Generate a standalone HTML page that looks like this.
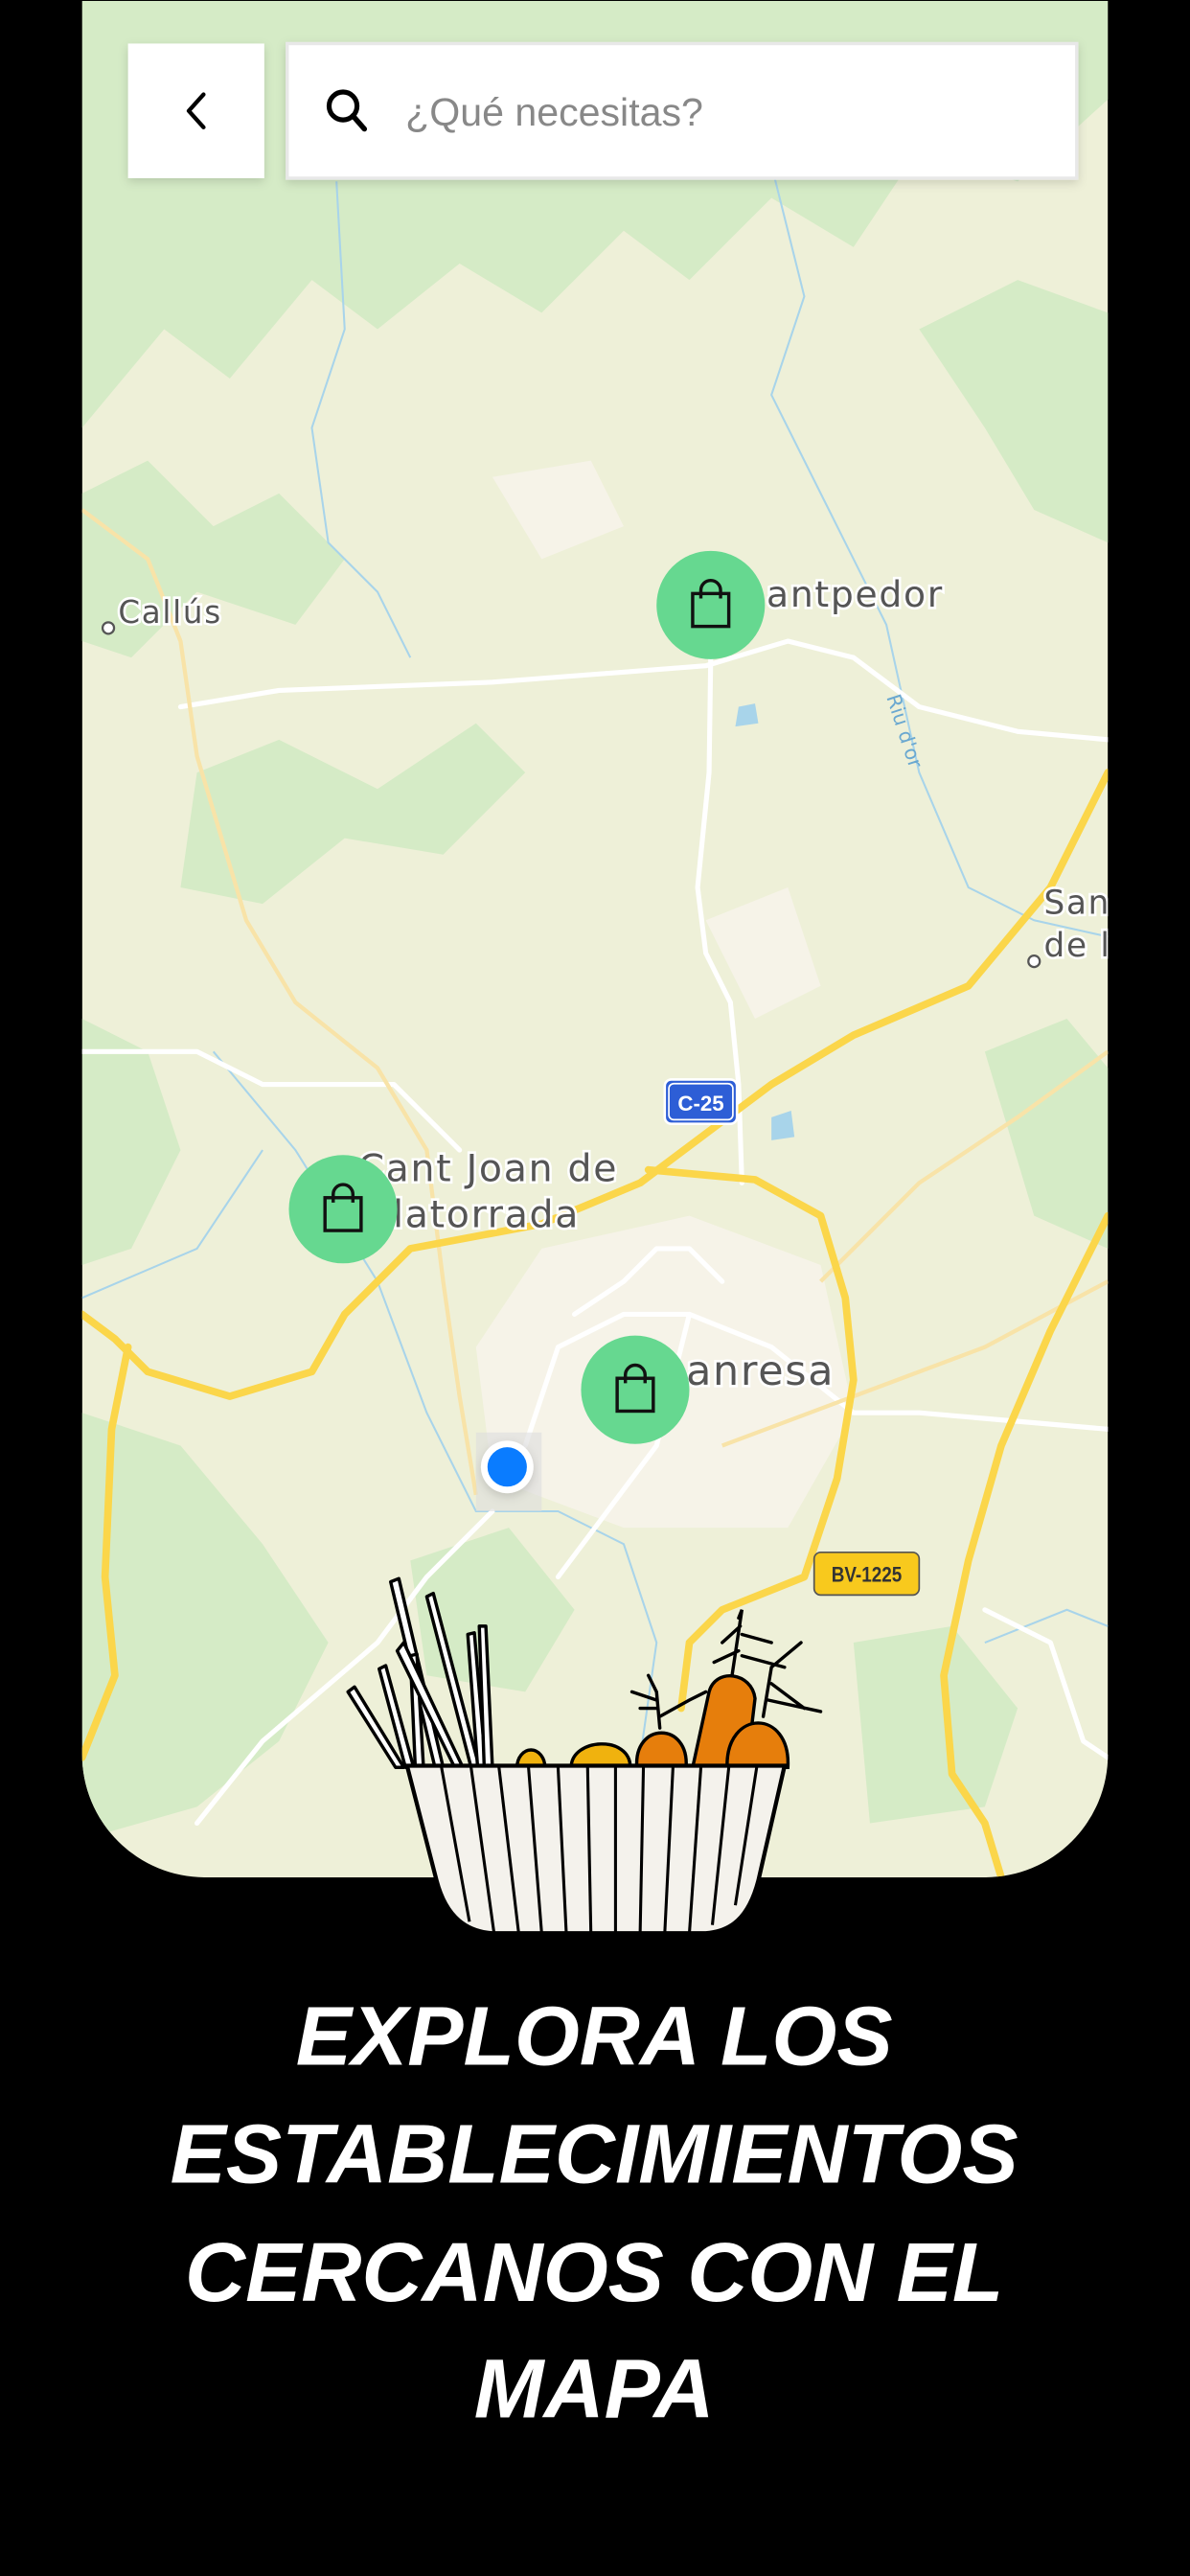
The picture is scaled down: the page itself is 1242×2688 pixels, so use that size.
<!DOCTYPE html>
<html><head><meta charset="utf-8"><style>
html,body{margin:0;padding:0;background:#000;}
svg{display:block;}
</style></head><body>
<svg width="1242" height="2688" viewBox="0 0 725 1568" xmlns="http://www.w3.org/2000/svg">
<defs>
<clipPath id="m"><path d="M50 0H675V1068A75 75 0 0 1 600 1143H125A75 75 0 0 1 50 1068Z"/></clipPath>
<filter id="sh" x="-10%" y="-20%" width="120%" height="150%"><feDropShadow dx="0" dy="2" stdDeviation="3" flood-opacity="0.15"/></filter>
</defs>
<rect width="725" height="1568" fill="#000"/>
<g clip-path="url(#m)">
<rect x="50" y="0" width="625" height="1143" fill="#eef0d8"/>
<g fill="#d5ebc6">
<path d="M50 0H675V60L620 110 560 90 520 150 470 120 420 170 380 140 330 190 280 160 230 200 190 170 140 230 100 200 50 260Z"/>
<path d="M50 300 90 280 130 320 170 300 210 340 180 380 120 360 80 400 50 390Z"/>
<path d="M560 200 620 170 675 190V330L630 310 600 260Z"/>
<path d="M120 470 170 450 230 480 290 440 320 470 270 520 210 510 160 550 110 540Z"/>
<path d="M50 620 90 640 110 700 80 760 50 770Z"/>
<path d="M50 860 110 880 160 940 200 1000 170 1060 120 1100 50 1120Z"/>
<path d="M520 1000 580 990 620 1040 600 1100 530 1110Z"/>
<path d="M250 950 310 930 350 980 320 1030 260 1020Z"/>
<path d="M600 640 650 620 675 650V760L630 740Z"/>
</g>
<g fill="#f6f3e8">
<path d="M330 760 420 740 500 770 520 860 480 930 380 930 300 900 290 820Z"/>
<path d="M430 560 480 540 500 600 460 620Z"/>
<path d="M300 290 360 280 380 320 330 340Z"/>
</g>
<g fill="none" stroke="#a8d4ea" stroke-width="1.2">
<path d="M205 110 210 200 190 260 200 330 230 360 250 400"/>
<path d="M470 100 490 180 470 240 500 300 540 380 560 470 590 540 630 560 675 570"/>
<path d="M130 640 180 700 230 780 260 860 290 920 340 920 380 940 400 1000 390 1070"/>
<path d="M50 790 120 760 160 700"/>
<path d="M600 1000 650 980 675 990"/>
</g>
<path d="M470 680 482 676 484 692 470 694Z" fill="#a8d4ea"/>
<path d="M450 430 460 428 462 440 448 442Z" fill="#a8d4ea"/>
<g fill="none" stroke="#fff" stroke-width="3" stroke-linecap="round" stroke-linejoin="round">
<path d="M110 430 170 420 300 415 430 405 480 390 520 400 560 430 620 445 675 450"/>
<path d="M433 400 432 470 425 540 430 580 445 610 450 660 452 720"/>
<path d="M50 640 120 640 160 660 240 660 280 700"/>
<path d="M350 800 380 780 400 760 420 760 440 780"/>
<path d="M320 880 340 820 380 800 420 800 470 820 520 860 560 860 675 870"/>
<path d="M300 920 260 960 230 1000 160 1060 120 1110"/>
<path d="M420 800 400 880 370 920 340 960"/>
<path d="M600 980 640 1000 660 1060 675 1070"/>
</g>
<g fill="none" stroke="#f8e3a8" stroke-width="2.5">
<path d="M50 310 90 340 110 390 120 460 150 560 180 610 230 650 260 700 270 780 280 850 290 910"/>
<path d="M500 780 560 720 620 680 675 640"/>
<path d="M440 880 520 850 600 820 675 780"/>
</g>
<g fill="none" stroke="#fbd64a" stroke-width="4.5" stroke-linecap="round" stroke-linejoin="round">
<path d="M50 800 70 815 90 835 140 850 190 835 210 800 250 760 330 745 390 720 430 690 470 660 520 630 590 600 640 540 675 470"/>
<path d="M395 712 460 718 500 740 515 790 520 840 510 900 490 960 440 980 420 1000 415 1040"/>
<path d="M675 740 640 810 610 880 590 950 575 1020 580 1080 600 1110 610 1143"/>
<path d="M78 820 68 870 64 960 70 1020 50 1070"/>
</g>
<rect x="405" y="657" width="44" height="27" rx="4" fill="#2d5ed6" stroke="#fff" stroke-width="1.5"/>
<rect x="407.5" y="659.5" width="39" height="22" rx="3" fill="none" stroke="#fff" stroke-width="1"/>
<text x="427" y="676" font-family="Liberation Sans,sans-serif" font-weight="bold" font-size="13" fill="#fff" text-anchor="middle">C-25</text>
<rect x="496" y="945" width="64" height="26" rx="4" fill="#f8c91d" stroke="#555" stroke-width="1"/>
<text x="528" y="963" font-family="Liberation Sans,sans-serif" font-weight="bold" font-size="13" fill="#333" text-anchor="middle" transform="translate(528 0) scale(0.85 1) translate(-528 0)">BV-1225</text>
<g font-family="DejaVu Sans,sans-serif" fill="#555" stroke="#fff" stroke-width="3" paint-order="stroke" letter-spacing="1">
<text x="72" y="379" font-size="19">Callús</text>
<text x="467" y="369" font-size="22">antpedor</text>
<text x="218" y="719" font-size="23">Cant Joan de</text>
<text x="232" y="747" font-size="23">llatorrada</text>
<text x="418" y="843" font-size="25">anresa</text>
<text x="636" y="556" font-size="20">San</text>
<text x="636" y="582" font-size="20">de l</text>
</g>
<circle cx="66" cy="382" r="3.5" fill="#fff" stroke="#555" stroke-width="1.3"/>
<circle cx="630" cy="585" r="3.5" fill="#fff" stroke="#555" stroke-width="1.3"/>
<text x="540" y="424" font-family="DejaVu Sans,sans-serif" font-size="12" fill="#6aa8d0" transform="rotate(72 540 424)">Riu d'or</text>
<g>
<circle cx="433" cy="368" r="33" fill="#66d890"/>
<circle cx="209" cy="736" r="33" fill="#66d890"/>
<circle cx="387" cy="846" r="33" fill="#66d890"/>
</g>
<g fill="none" stroke="#111" stroke-width="2">
<g transform="translate(433 368)"><rect x="-11" y="-7" width="22" height="20"/><path d="M-6 -4V-9A6 6 0 0 1 6 -9V-4"/></g>
<g transform="translate(209 736)"><rect x="-11" y="-7" width="22" height="20"/><path d="M-6 -4V-9A6 6 0 0 1 6 -9V-4"/></g>
<g transform="translate(387 846)"><rect x="-11" y="-7" width="22" height="20"/><path d="M-6 -4V-9A6 6 0 0 1 6 -9V-4"/></g>
</g>
<rect x="290" y="872" width="40" height="48" fill="#ddd" opacity="0.6"/>
<circle cx="309" cy="893" r="16" fill="#fff" filter="url(#sh)"/>
<circle cx="309" cy="893" r="12" fill="#0a7cff"/>
</g>
<rect x="78" y="26" width="83" height="82" fill="#fff" filter="url(#sh)"/>
<path d="M124 57 115 67 124 77" fill="none" stroke="#000" stroke-width="2.5" stroke-linecap="round" stroke-linejoin="round"/>
<rect x="175" y="26" width="481" height="82" fill="#fff" stroke="#e8e8e8" stroke-width="2" filter="url(#sh)"/>
<circle cx="209" cy="64" r="8.5" fill="none" stroke="#000" stroke-width="3"/>
<path d="M215 70 222 78" stroke="#000" stroke-width="3.2" stroke-linecap="round"/>
<text x="247" y="76" font-family="Liberation Sans,sans-serif" font-size="24" fill="#888">¿Qué necesitas?</text>
<g fill="#fff" stroke="#000" stroke-width="2" stroke-linejoin="round">
<path d="M212 1030 216 1027 246 1076 241 1076Z"/>
<path d="M231 1016 235 1014 252 1076 247 1076Z"/>
<path d="M238 963 243 961 270 1076 265 1076Z"/>
<path d="M250 1008 254 1007 258 1076 253 1076Z"/>
<path d="M260 972 264 970 292 1076 287 1076Z"/>
<path d="M242 1005 246 1000 282 1076 277 1076Z"/>
<path d="M285 995 289 994 296 1076 291 1076Z"/>
<path d="M292 990 296 990 300 1076 295 1076Z"/>
</g>
<g stroke="#000" stroke-width="2">
<path d="M315 1076A8 10 0 0 1 332 1076Z" fill="#f0b20e"/>
<path d="M348 1076C348 1058 384 1056 384 1076Z" fill="#f0b20e"/>
<path d="M388 1076C386 1048 420 1048 418 1076Z" fill="#e67e0c"/>
<path d="M422 1076 432 1030C436 1015 458 1018 460 1034L455 1076Z" fill="#e67e0c"/>
<path d="M443 1076C442 1040 482 1040 480 1076Z" fill="#e67e0c"/>
</g>
<g fill="none" stroke="#000" stroke-width="2" stroke-linecap="round">
<path d="M402 1052 400 1030 395 1020M400 1035 385 1030M400 1040 390 1040M402 1045 420 1035 430 1030"/>
<path d="M446 1020 452 980 450 985M451 990 440 1000M452 995 470 1000M450 1005 435 1012M452 1008 478 1015"/>
<path d="M465 1045 470 1015 488 1000M470 1025 490 1040M468 1035 500 1042"/>
</g>
<path d="M248 1075H478L462 1145C456 1168 445 1176 430 1177H300C285 1176 272 1168 266 1145Z" fill="#f4f2ec" stroke="#000" stroke-width="2.5"/>
<g stroke="#000" stroke-width="1.8">
<path d="M269 1076 286 1170"/><path d="M287 1076 301 1177"/><path d="M304 1076 316 1177"/><path d="M322 1076 330 1177"/><path d="M340 1076 345 1177"/><path d="M358 1076 360 1177"/><path d="M375 1076 375 1177"/><path d="M392 1076 390 1177"/><path d="M410 1076 405 1177"/><path d="M427 1076 420 1177"/><path d="M444 1076 434 1172"/><path d="M461 1076 448 1160"/>
</g>
<g font-family="Liberation Sans,sans-serif" font-weight="bold" font-style="italic" font-size="51" fill="#fff" text-anchor="middle">
<text x="362" y="1257">EXPLORA LOS</text>
<text x="362" y="1329">ESTABLECIMIENTOS</text>
<text x="362" y="1401">CERCANOS CON EL</text>
<text x="362" y="1472">MAPA</text>
</g>
</svg>
</body></html>
